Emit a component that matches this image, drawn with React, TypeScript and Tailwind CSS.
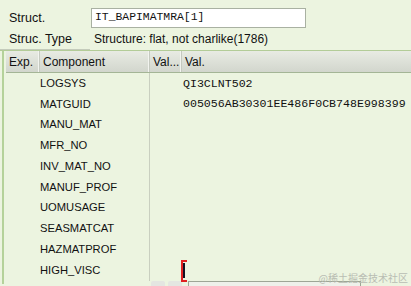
const rows: { name: string; val?: string }[] = [
  { name: "LOGSYS", val: "QI3CLNT502" },
  { name: "MATGUID", val: "005056AB30301EE486F0CB748E998399" },
  { name: "MANU_MAT" },
  { name: "MFR_NO" },
  { name: "INV_MAT_NO" },
  { name: "MANUF_PROF" },
  { name: "UOMUSAGE" },
  { name: "SEASMATCAT" },
  { name: "HAZMATPROF" },
  { name: "HIGH_VISC" },
];

const sans = "font-['Liberation_Sans',Arial,sans-serif]";
const mono = "font-['Liberation_Mono','Courier_New',monospace]";

function Cursor() {
  return (
    <div className="absolute left-[181px] top-[260px] w-[6px] h-[22px]">
      <div className="absolute left-0 top-0 w-[2px] h-[22px] bg-[#e02020]" />
      <div className="absolute left-0 top-0 w-[6px] h-[2px] bg-[#e02020]" />
      <div className="absolute left-0 bottom-0 w-[6px] h-[2px] bg-[#e02020]" />
      <div className="absolute left-[2px] top-[3px] w-[2px] h-[15px] bg-[#111122]" />
    </div>
  );
}

export default function App() {
  return (
    <div className={`relative w-[411px] h-[286px] overflow-hidden bg-[#ecf4e0] text-[#111] ${sans}`}>
      {/* Struct. */}
      <div className="flex items-center h-[20px] mt-[8px]">
        <span className="w-[91px] pl-[9px] text-[12.5px]">Struct.</span>
        <div className={`w-[215px] h-[20px] bg-white border border-[#a9b1a2] pl-[3px] flex items-center text-[11.4px] ${mono}`}>
          IT_BAPIMATMRA[1]
        </div>
      </div>

      {/* Struc. Type */}
      <div className="flex items-center h-[20px] mt-[1px]">
        <span className="w-[94px] pl-[9px] text-[12.5px]">Struc. Type</span>
        <span className="text-[12px]">Structure: flat, not charlike(1786)</span>
      </div>
      <div className="flex h-[1px]">
        <div className="w-[90px] bg-[#c4cbbb]" />
        <div className="flex-1" />
      </div>
      <div className="h-[1px] bg-[#b3cc98]" />

      {/* table */}
      <div className="flex">
        <div className="w-[2px] ml-[2px] h-[233px] bg-[#b5d29a]" />
        <div className="ml-[2px] flex-1 flex flex-col">
          <div className="flex h-[22px] bg-gradient-to-b from-[#e8ebe3] to-[#d2d6cd] border-b border-[#a4b596] text-[12px]">
            <div className="w-[33px] pl-[3px] flex items-center border-r border-[#f2f4ef]">Exp.</div>
            <div className="w-[110px] pl-[3px] flex items-center border-x border-[#f2f4ef] border-l-[#c5c9c0]">Component</div>
            <div className="w-[32px] pl-[3px] flex items-center border-x border-[#f2f4ef] border-l-[#c5c9c0]">Val...</div>
            <div className="flex-1 pl-[3px] flex items-center border-l border-[#c5c9c0]">Val.</div>
          </div>
          <div className="flex flex-col">
            {rows.map((r) => (
              <div key={r.name} className="flex h-[20.75px] items-center">
                <div className="w-[33px]" />
                <div className="w-[111px] pl-[1px] h-full flex items-center border-r border-[#c9cfc0] text-[11.2px]">{r.name}</div>
                <div className="w-[33px]" />
                <div className={`text-[11.6px] ${mono}`}>{r.val ?? ""}</div>
              </div>
            ))}
          </div>
        </div>
      </div>

      {/* bottom strip */}
      <div className="flex items-start h-[6px] mt-[-3px]">
        <div className="w-[151px]" />
        <div className="w-[14px] h-[6px] bg-[#e4e6e1] rounded-t-[2px]" />
        <div className="w-[3px]" />
        <div className="w-[14px] h-[6px] bg-[#e4e6e1] rounded-t-[2px]" />
        <div className="w-[6px]" />
        <div className="w-[173px] h-[6px] bg-[#eef1ea] border border-b-0 border-[#9ea696]" />
      </div>

      <Cursor />

      <div className="absolute right-[3px] top-[272px] text-[10px] leading-[12px] text-[#b9bdb3] font-['Noto_Sans_CJK_SC',sans-serif]">
        @稀土掘金技术社区
      </div>
    </div>
  );
}
